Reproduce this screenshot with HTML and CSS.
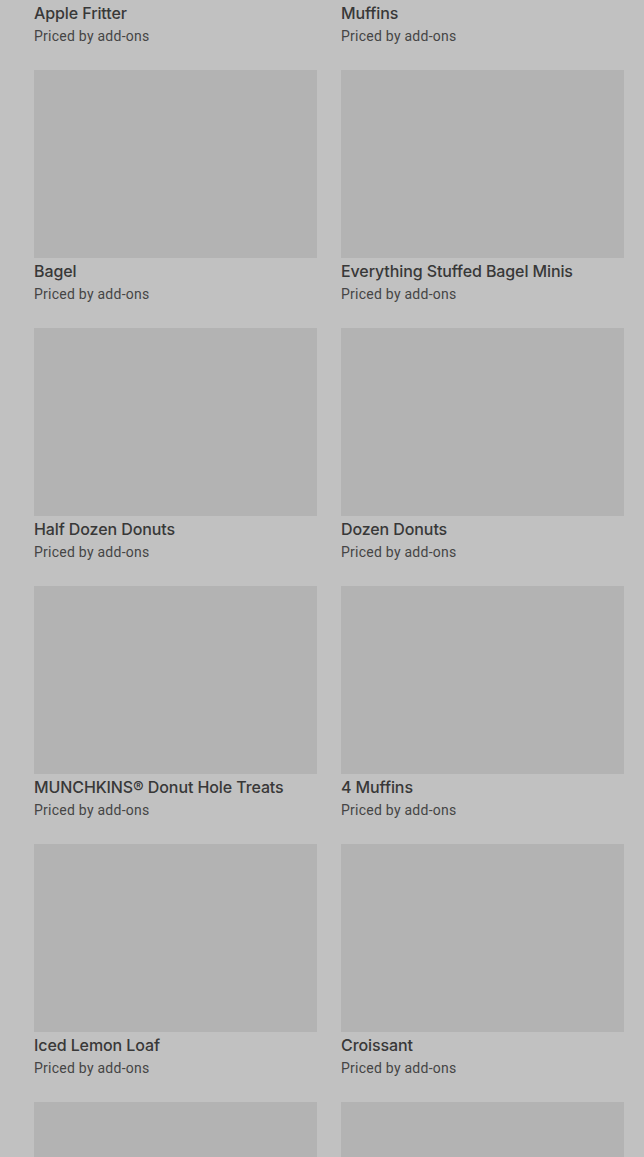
FILE: index.html
```html
<!DOCTYPE html>
<html lang="en">
<head>
<meta charset="utf-8">
<title>Menu</title>
<link rel="stylesheet" href="styles.css">
</head>
<body>
<main class="page">
  <section class="grid">
    <article class="item"><div class="thumb"></div><h3 class="name">Apple Fritter</h3><p class="price">Priced by add-ons</p></article>
    <article class="item"><div class="thumb"></div><h3 class="name">Muffins</h3><p class="price">Priced by add-ons</p></article>
    <article class="item"><div class="thumb"></div><h3 class="name">Bagel</h3><p class="price">Priced by add-ons</p></article>
    <article class="item"><div class="thumb"></div><h3 class="name">Everything Stuffed Bagel Minis</h3><p class="price">Priced by add-ons</p></article>
    <article class="item"><div class="thumb"></div><h3 class="name">Half Dozen Donuts</h3><p class="price">Priced by add-ons</p></article>
    <article class="item"><div class="thumb"></div><h3 class="name">Dozen Donuts</h3><p class="price">Priced by add-ons</p></article>
    <article class="item"><div class="thumb"></div><h3 class="name">MUNCHKINS® Donut Hole Treats</h3><p class="price">Priced by add-ons</p></article>
    <article class="item"><div class="thumb"></div><h3 class="name">4 Muffins</h3><p class="price">Priced by add-ons</p></article>
    <article class="item"><div class="thumb"></div><h3 class="name">Iced Lemon Loaf</h3><p class="price">Priced by add-ons</p></article>
    <article class="item"><div class="thumb"></div><h3 class="name">Croissant</h3><p class="price">Priced by add-ons</p></article>
    <article class="item"><div class="thumb"></div></article>
    <article class="item"><div class="thumb"></div></article>
  </section>
</main>
</body>
</html>
```

FILE: styles.css
```css
html, body {
  margin: 0;
  padding: 0;
  background: #c1c1c1;
  overflow: hidden;
}
body {
  font-family: Roboto, "Liberation Sans", sans-serif;
  color: #3a3a3a;
}
.page {
  padding: 0 20px 0 34px;
  height: 1157px;
  overflow: hidden;
}
.grid {
  display: grid;
  grid-template-columns: 283px 283px;
  column-gap: 24px;
  row-gap: 24px;
  margin-top: -188px;
}
.item {
  display: flex;
  flex-direction: column;
}
.thumb {
  height: 188px;
  background: #b3b3b3;
}
.name {
  margin: 1px 0 0;
  font-family: Inter, Roboto, sans-serif;
  font-size: 16px;
  font-weight: 500;
  line-height: 24px;
  letter-spacing: -0.1px;
  color: #383838;
}
.price {
  margin: 1px 0 0;
  font-size: 14px;
  letter-spacing: 0.25px;
  line-height: 20px;
  color: #454545;
}
```
